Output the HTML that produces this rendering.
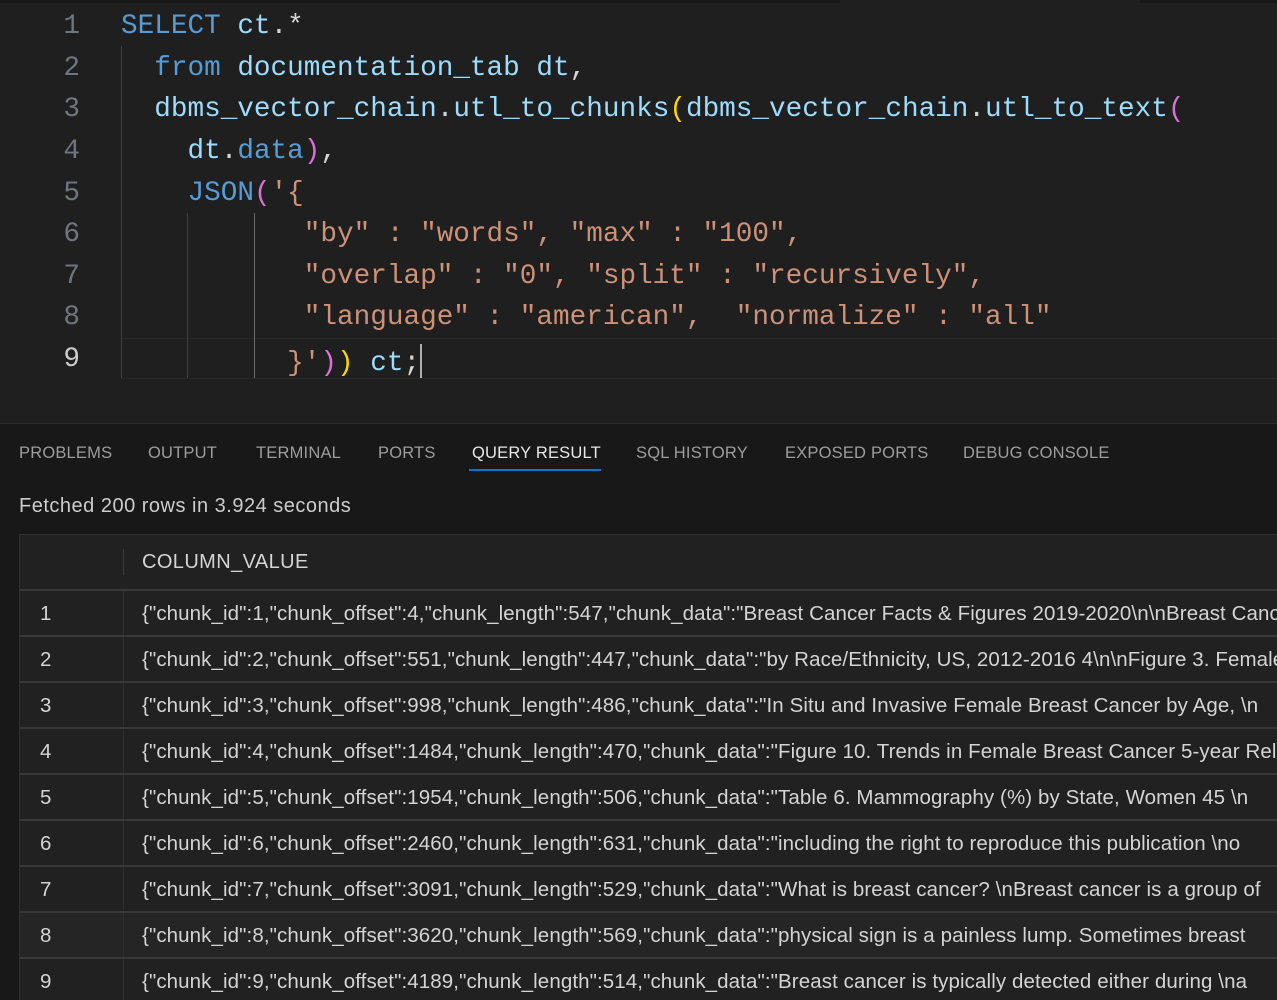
<!DOCTYPE html>
<html><head><meta charset="utf-8"><style>
*{margin:0;padding:0;box-sizing:border-box}
body{width:1277px;height:1000px;overflow:hidden;background:#181818;font-family:"Liberation Sans",sans-serif;position:relative}
#ed{position:absolute;left:0;top:0;width:1277px;height:424px;background:#1f1f1f;border-bottom:1px solid #2b2b2b}
.topbar{position:absolute;top:0;height:3px;background:#181818}
.ln{position:absolute;left:0;width:80px;text-align:right;font:27.7px "Liberation Mono",monospace;color:#6e7681}
.code{position:absolute;left:121px;font:27.7px "Liberation Mono",monospace;white-space:pre;color:#9cdcfe}
.k{color:#569cd6}.s{color:#ce9178}.p{color:#d4d4d4}.m{color:#da70d6}.y{color:#ffd700}
.g{position:absolute;width:1px;background:#404040}
#tabs{position:absolute;top:444px;left:19px;font-size:16.5px;color:#9d9d9d;letter-spacing:.2px}
#tabs span{position:absolute;white-space:nowrap}
#fetch{position:absolute;left:19px;top:495px;font-size:20px;letter-spacing:.5px;color:#cccccc}
#tbl{position:absolute;left:19px;top:534px;width:1258px;height:466px;overflow:hidden;background:#212121;border:1px solid #303030;border-right:none;border-bottom:none}
.row{position:absolute;left:0;width:1258px;height:46px;overflow:hidden;border-top:2px solid #383838;font-size:20.5px;letter-spacing:.1px;color:#d4d4d4;white-space:nowrap}
.row .n{position:absolute;left:20px;top:11px}
.row .v{position:absolute;left:122px;top:11px}
.vl{position:absolute;left:103px;top:0;bottom:0;width:1px;background:#2e2e2e}
</style></head><body>
<div id="ed">
<div class="topbar" style="left:0;width:840px"></div>
<div class="topbar" style="left:1140px;width:137px"></div>
<div class="ln" style="top:11px">1</div>
<div class="ln" style="top:53px">2</div>
<div class="ln" style="top:94px">3</div>
<div class="ln" style="top:136px">4</div>
<div class="ln" style="top:178px">5</div>
<div class="ln" style="top:219px">6</div>
<div class="ln" style="top:261px">7</div>
<div class="ln" style="top:302px">8</div>
<div class="ln" style="top:344px;color:#cccccc">9</div>
<div style="position:absolute;left:121px;top:338px;width:1156px;height:41px;border-top:1px solid #282828;border-bottom:1px solid #282828"></div>
<div class="g" style="left:121px;top:46px;height:332px"></div>
<div class="g" style="left:187px;top:213px;height:165px"></div>
<div class="g" style="left:254px;top:213px;height:165px;background:#6a6a6a"></div>
<div class="code" style="top:11px"><span class="k">SELECT</span> ct<span class="p">.*</span></div>
<div class="code" style="top:53px">  <span class="k">from</span> documentation_tab dt<span class="p">,</span></div>
<div class="code" style="top:94px">  dbms_vector_chain<span class="p">.</span>utl_to_chunks<span class="y">(</span>dbms_vector_chain<span class="p">.</span>utl_to_text<span class="m">(</span></div>
<div class="code" style="top:136px">    dt<span class="p">.</span><span class="k">data</span><span class="m">)</span><span class="p">,</span></div>
<div class="code" style="top:178px">    <span class="k">JSON</span><span class="m">(</span><span class="s">'{</span></div>
<div class="code s" style="top:219px">           "by" : "words", "max" : "100",</div>
<div class="code s" style="top:261px">           "overlap" : "0", "split" : "recursively",</div>
<div class="code s" style="top:302px">           "language" : "american",  "normalize" : "all"</div>
<div class="code" style="top:344px">          <span class="s">}'</span><span class="m">)</span><span class="y">)</span> ct<span class="p">;</span><span style="display:inline-block;width:2px;height:34px;background:#aeafad;vertical-align:-8px"></span></div>
</div>
<div id="tabs">
<span style="left:0">PROBLEMS</span>
<span style="left:129px">OUTPUT</span>
<span style="left:237px">TERMINAL</span>
<span style="left:359px">PORTS</span>
<span style="left:453px;color:#e7e7e7">QUERY RESULT</span>
<span style="left:617px">SQL HISTORY</span>
<span style="left:766px">EXPOSED PORTS</span>
<span style="left:944px">DEBUG CONSOLE</span>
</div>
<div style="position:absolute;left:469px;top:469px;width:132px;height:2px;background:#0078d4"></div>
<div id="fetch">Fetched 200 rows in 3.924 seconds</div>
<div id="tbl">
<div class="vl" style="top:14px;bottom:auto;height:26px;background:#3a3a3a"></div>
<div style="position:absolute;left:122px;top:16px;font-size:20px;letter-spacing:.4px;color:#d4d4d4">COLUMN_VALUE</div>
<div class="row" style="top:54px"><div class="vl"></div><span class="n">1</span><span class="v">{"chunk_id":1,"chunk_offset":4,"chunk_length":547,"chunk_data":"Breast Cancer Facts &amp; Figures 2019-2020\n\nBreast Cancer</span></div>
<div class="row" style="top:100px"><div class="vl"></div><span class="n">2</span><span class="v">{"chunk_id":2,"chunk_offset":551,"chunk_length":447,"chunk_data":"by Race/Ethnicity, US, 2012-2016 4\n\nFigure 3. Female</span></div>
<div class="row" style="top:146px"><div class="vl"></div><span class="n">3</span><span class="v">{"chunk_id":3,"chunk_offset":998,"chunk_length":486,"chunk_data":"In Situ and Invasive Female Breast Cancer by Age, \n</span></div>
<div class="row" style="top:192px"><div class="vl"></div><span class="n">4</span><span class="v">{"chunk_id":4,"chunk_offset":1484,"chunk_length":470,"chunk_data":"Figure 10. Trends in Female Breast Cancer 5-year Rel</span></div>
<div class="row" style="top:238px"><div class="vl"></div><span class="n">5</span><span class="v">{"chunk_id":5,"chunk_offset":1954,"chunk_length":506,"chunk_data":"Table 6. Mammography (%) by State, Women 45 \n</span></div>
<div class="row" style="top:284px"><div class="vl"></div><span class="n">6</span><span class="v">{"chunk_id":6,"chunk_offset":2460,"chunk_length":631,"chunk_data":"including the right to reproduce this publication \no</span></div>
<div class="row" style="top:330px"><div class="vl"></div><span class="n">7</span><span class="v">{"chunk_id":7,"chunk_offset":3091,"chunk_length":529,"chunk_data":"What is breast cancer? \nBreast cancer is a group of</span></div>
<div class="row" style="top:376px;background:#252525"><div class="vl"></div><span class="n">8</span><span class="v">{"chunk_id":8,"chunk_offset":3620,"chunk_length":569,"chunk_data":"physical sign is a painless lump. Sometimes breast</span></div>
<div class="row" style="top:422px"><div class="vl"></div><span class="n">9</span><span class="v">{"chunk_id":9,"chunk_offset":4189,"chunk_length":514,"chunk_data":"Breast cancer is typically detected either during \na</span></div>
</div>
</body></html>
